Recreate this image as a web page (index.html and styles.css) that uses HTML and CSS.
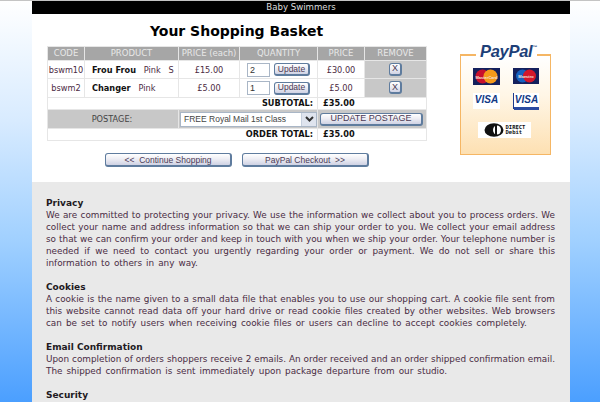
FILE: index.html
```html
<!DOCTYPE html>
<html lang="en">
<head>
<meta charset="utf-8">
<title>Your Shopping Basket</title>
<link rel="stylesheet" href="styles.css">
</head>
<body>
<div class="page">
  <div class="topbar">Baby Swimmers</div>
  <div class="main">
    <div class="basket">
      <h1>Your Shopping Basket</h1>
      <table class="cart">
        <colgroup><col class="c1"><col class="c2"><col class="c3"><col class="c4"><col class="c5"><col class="c6"></colgroup>
        <tr class="head"><th>CODE</th><th>PRODUCT</th><th>PRICE (each)</th><th>QUANTITY</th><th>PRICE</th><th>REMOVE</th></tr>
        <tr class="item first">
          <td class="ctr">bswm10</td>
          <td class="prod"><div class="clip"><b>Frou Frou</b>&nbsp;&nbsp;&nbsp;Pink&nbsp;&nbsp;&nbsp;S</div></td>
          <td class="ctr">£15.00</td>
          <td class="qty"><span class="qbox">2</span><button class="btn small">Update</button></td>
          <td class="ctr">£30.00</td>
          <td class="rem"><button class="btn x">X</button></td>
        </tr>
        <tr class="item">
          <td class="ctr">bswm2</td>
          <td class="prod"><div class="clip"><b>Changer</b>&nbsp;&nbsp;&nbsp;Pink</div></td>
          <td class="ctr">£5.00</td>
          <td class="qty"><span class="qbox">1</span><button class="btn small">Update</button></td>
          <td class="ctr">£5.00</td>
          <td class="rem"><button class="btn x">X</button></td>
        </tr>
        <tr class="sum"><td colspan="4" class="lab">SUBTOTAL:</td><td colspan="2" class="val">£35.00</td></tr>
        <tr class="post">
          <td colspan="2" class="ptitle">POSTAGE:</td>
          <td colspan="2" class="psel"><span class="select"><span class="seltext">FREE Royal Mail 1st Class</span><span class="arrow"><svg width="9" height="6" viewBox="0 0 9 6"><path d="M1 1l3.500 3.500L8 1" fill="none" stroke="#333" stroke-width="2"/></svg></span></span></td>
          <td colspan="2" class="pbtn"><button class="btn wide">UPDATE POSTAGE</button></td>
        </tr>
        <tr class="sum"><td colspan="4" class="lab">ORDER TOTAL:</td><td colspan="2" class="val">£35.00</td></tr>
      </table>
      <div class="actions">
        <button class="btn act">&lt;&lt;&nbsp;&nbsp;Continue Shopping</button>
        <button class="btn act">PayPal Checkout&nbsp;&nbsp;&gt;&gt;</button>
      </div>
    </div>
    <aside class="pay">
      <div class="paytop">
        <span class="payline"></span>
        <span class="paylogo"><i>PayPal</i><sup>™</sup></span>
        <span class="payline end"></span>
      </div>
      <div class="paybox">
        <div class="cards">
          <div class="card mc">
            <svg width="27" height="17" viewBox="0 0 27 17"><rect width="27" height="17" fill="#14205c"/><circle cx="9.500" cy="8.500" r="7" fill="#c8102e"/><circle cx="17.500" cy="8.500" r="7" fill="#f59a1b"/><text x="13.500" y="10.500" text-anchor="middle" class="cardword">MasterCard</text></svg>
          </div>
          <div class="card mc">
            <svg width="26" height="16" viewBox="0 0 26 16"><rect width="26" height="16" fill="#14205c"/><circle cx="9.500" cy="8" r="6.500" fill="#1560c0"/><circle cx="16.500" cy="8" r="6.500" fill="#d3172b"/><text x="13" y="10" text-anchor="middle" class="cardword">Maestro</text></svg>
          </div>
          <div class="card visa"><span class="vtext">VISA</span></div>
          <div class="card visa2"><span class="vtext">VISA</span><span class="vbar"></span></div>
        </div>
        <div class="dd">
          <svg width="20" height="14" viewBox="0 0 20 14"><ellipse cx="10" cy="7" rx="9.500" ry="6.800" fill="#111"/><ellipse cx="13" cy="7" rx="4" ry="4.500" fill="#fff"/><rect x="11" y="1" width="2" height="12" fill="#111"/></svg>
          <span class="ddtext">DIRECT<br>Debit</span>
        </div>
      </div>
    </aside>
  </div>
  <div class="info">
    <h2>Privacy</h2>
    <p>
      <span class="ln">We are committed to protecting your privacy. We use the information we collect about you to process orders. We</span>
      <span class="ln">collect your name and address information so that we can ship your order to you. We collect your email address</span>
      <span class="ln">so that we can confirm your order and keep in touch with you when we ship your order. Your telephone number is</span>
      <span class="ln">needed if we need to contact you urgently regarding your order or payment. We do not sell or share this</span>
      <span class="end">information to others in any way.</span>
    </p>
    <h2>Cookies</h2>
    <p>
      <span class="ln">A cookie is the name given to a small data file that enables you to use our shopping cart. A cookie file sent from</span>
      <span class="ln">this website cannot read data off your hard drive or read cookie files created by other websites. Web browsers</span>
      <span class="end">can be set to notify users when receiving cookie files or users can decline to accept cookies completely.</span>
    </p>
    <h2>Email Confirmation</h2>
    <p>
      <span class="ln">Upon completion of orders shoppers receive 2 emails. An order received and an order shipped confirmation email.</span>
      <span class="end">The shipped confirmation is sent immediately upon package departure from our studio.</span>
    </p>
    <h2>Security</h2>
  </div>
</div>
</body>
</html>
```

FILE: styles.css
```css
html, body { margin: 0; padding: 0; height: 402px; overflow: hidden; }
body {
  background: linear-gradient(to bottom, #ffffff 0%, #d8ebff 30%, #a0d0ff 60%, #4b9fff 100%);
  border-top: 1px solid #c4c4c4;
  box-sizing: border-box;
  font-family: "DejaVu Sans", Verdana, sans-serif;
  color: #33222f;
}
.page { width: 538px; margin-left: 32px; background: #fff; height: 401px; overflow: hidden; }
.topbar {
  background: #000; color: #ddd; height: 13px; line-height: 13px;
  text-align: center; font-size: 8.600px;
}
.main { display: flex; height: 168px; padding-left: 15px; }
.basket { width: 379px; }
h1 {
  margin: 9px 0 0; height: 23px; line-height: 17px; text-align: center;
  font-size: 14px; font-weight: bold; color: #000;
}
.cart {
  width: 379px; table-layout: fixed; border-collapse: collapse;
  font-size: 8.200px; border: 1px solid #e6e6e6;
}
.c1 { width: 37px; } .c2 { width: 94px; } .c3 { width: 61px; }
.c4 { width: 78px; } .c5 { width: 47px; } .c6 { width: 62px; }
.cart th, .cart td { padding: 0; border: 1px solid #e6e6e6; }
.head th { background: #a6a6a6; color: #e8e8e8; font-weight: normal; font-size: 8.500px; height: 13px; line-height: 13px; }
.item td { height: 18px; color: #4b2a42; }
.item.first td { height: 17px; }
.ctr { text-align: center; }
.prod { padding-left: 7px !important; }
.clip { overflow: hidden; white-space: nowrap; width: 86px; }
.clip b { color: #111; }
.qty { white-space: nowrap; padding-left: 7px !important; }
.qbox {
  display: inline-block; vertical-align: middle; box-sizing: border-box; width: 23px; height: 14px;
  border: 1px solid #a9b6c6; background: #fff; margin-right: 4px; padding-left: 2px;
  font: 9px/12px "Liberation Sans", sans-serif; color: #333;
}
.rem { background: #c8c8c8; text-align: center; }
.sum td { height: 11px; line-height: 11px; font-weight: bold; color: #111; }
.lab { text-align: right; padding-right: 4px !important; }
.val { padding-left: 5px !important; }
.post td { background: #c8c8c8; height: 18px; }
.post .ptitle { text-align: center; color: #444; padding-right: 2px; }
.psel { padding-left: 1px !important; }
.select {
  display: flex; align-items: center; justify-content: space-between; box-sizing: border-box;
  width: 137px; height: 15px; background: #fff; border: 1px solid #a9b6c6;
  font: 8.500px "Liberation Sans", sans-serif; color: #444; padding-left: 3px;
}
.arrow {
  display: flex; align-items: center; justify-content: center; width: 14px; height: 13px;
  background: #dfe4ee; border-left: 1px solid #c5cfdd;
}
.btn {
  box-sizing: border-box; padding: 0; border: 1px solid #5f7c9e; border-right-width: 2px; border-bottom-width: 2px; border-radius: 3px;
  background: linear-gradient(to bottom, #ffffff 0%, #eeeef4 45%, #cfd2e4 100%);
  font-family: "Liberation Sans", sans-serif; font-size: 8.500px; color: #4b3a55;
}
.small { width: 36px; height: 13px; line-height: 9px; vertical-align: middle; }
.x { width: 13px; height: 13px; line-height: 9px; display: block; margin: 0 auto 1px; font-size: 9px; }
.wide { width: 103px; height: 13px; line-height: 9px; display: block; margin-left: 2px; font-size: 9px; }
.actions { display: flex; gap: 10px; margin-top: 12px; margin-left: 58px; }
.act { width: 127px; height: 14px; line-height: 10px; }
.pay { margin-left: 34px; width: 91px; }
.paytop { display: flex; align-items: flex-end; height: 42px; }
.payline { display: block; width: 16px; height: 2px; background: #f5b664; }
.payline.end { flex: 1; width: auto; }
.paylogo {
  display: block; margin: 0 0 -4px 4px; white-space: nowrap;
  font: italic bold 16.500px/17px "Liberation Sans", sans-serif; color: #1d3f78;
}
.paylogo i { letter-spacing: -0.300px; }
.paylogo sup { font-size: 5px; font-style: normal; vertical-align: top; line-height: 8px; }
.paybox {
  box-sizing: border-box; width: 91px; height: 99px;
  border: 1px solid #f5b664; border-top: 0; padding-top: 12px;
  background: linear-gradient(to bottom, #ffffff 0%, #fff6e6 40%, #fde0b2 100%);
}
.cards {
  display: grid; grid-template-columns: 27px 26px; column-gap: 13px; row-gap: 8px;
  margin-left: 12px;
}
.card { height: 17px; }
.cardword { font: bold 4px "Liberation Sans", sans-serif; fill: #f4e4dc; }
.mc svg { display: block; }
.visa, .visa2 { background: #fff; text-align: center; }
.vtext { font: italic bold 10px/14px "Liberation Sans", sans-serif; color: #123a86; display: block; }
.visa { height: 16px; }
.visa2 { height: 16px; border-left: 1px solid #1c3a8c; width: 25px; }
.vbar { display: block; height: 3px; background: #2a4aa0; }
.dd {
  display: flex; align-items: center; justify-content: center; gap: 2px; margin: 13px 0 0 17px;
  width: 53px; height: 16px; background: #fff;
}
.dd svg { display: block; }
.ddtext { font: bold 5.500px/5.500px "DejaVu Sans Mono", monospace; color: #111; }
.info { background: #e9e9e9; padding: 15px 15px 0 14px; height: 220px; font-size: 8.850px; line-height: 12px; }
.info h2 { margin: 0; font-size: 9px; line-height: 12px; color: #221a22; font-weight: bold; }
.info p { margin: 0 0 12px; color: #4a2c44; }
.ln { display: block; text-align: justify; text-align-last: justify; white-space: nowrap; }
.info .end { display: block; word-spacing: 1.200px; }
```
